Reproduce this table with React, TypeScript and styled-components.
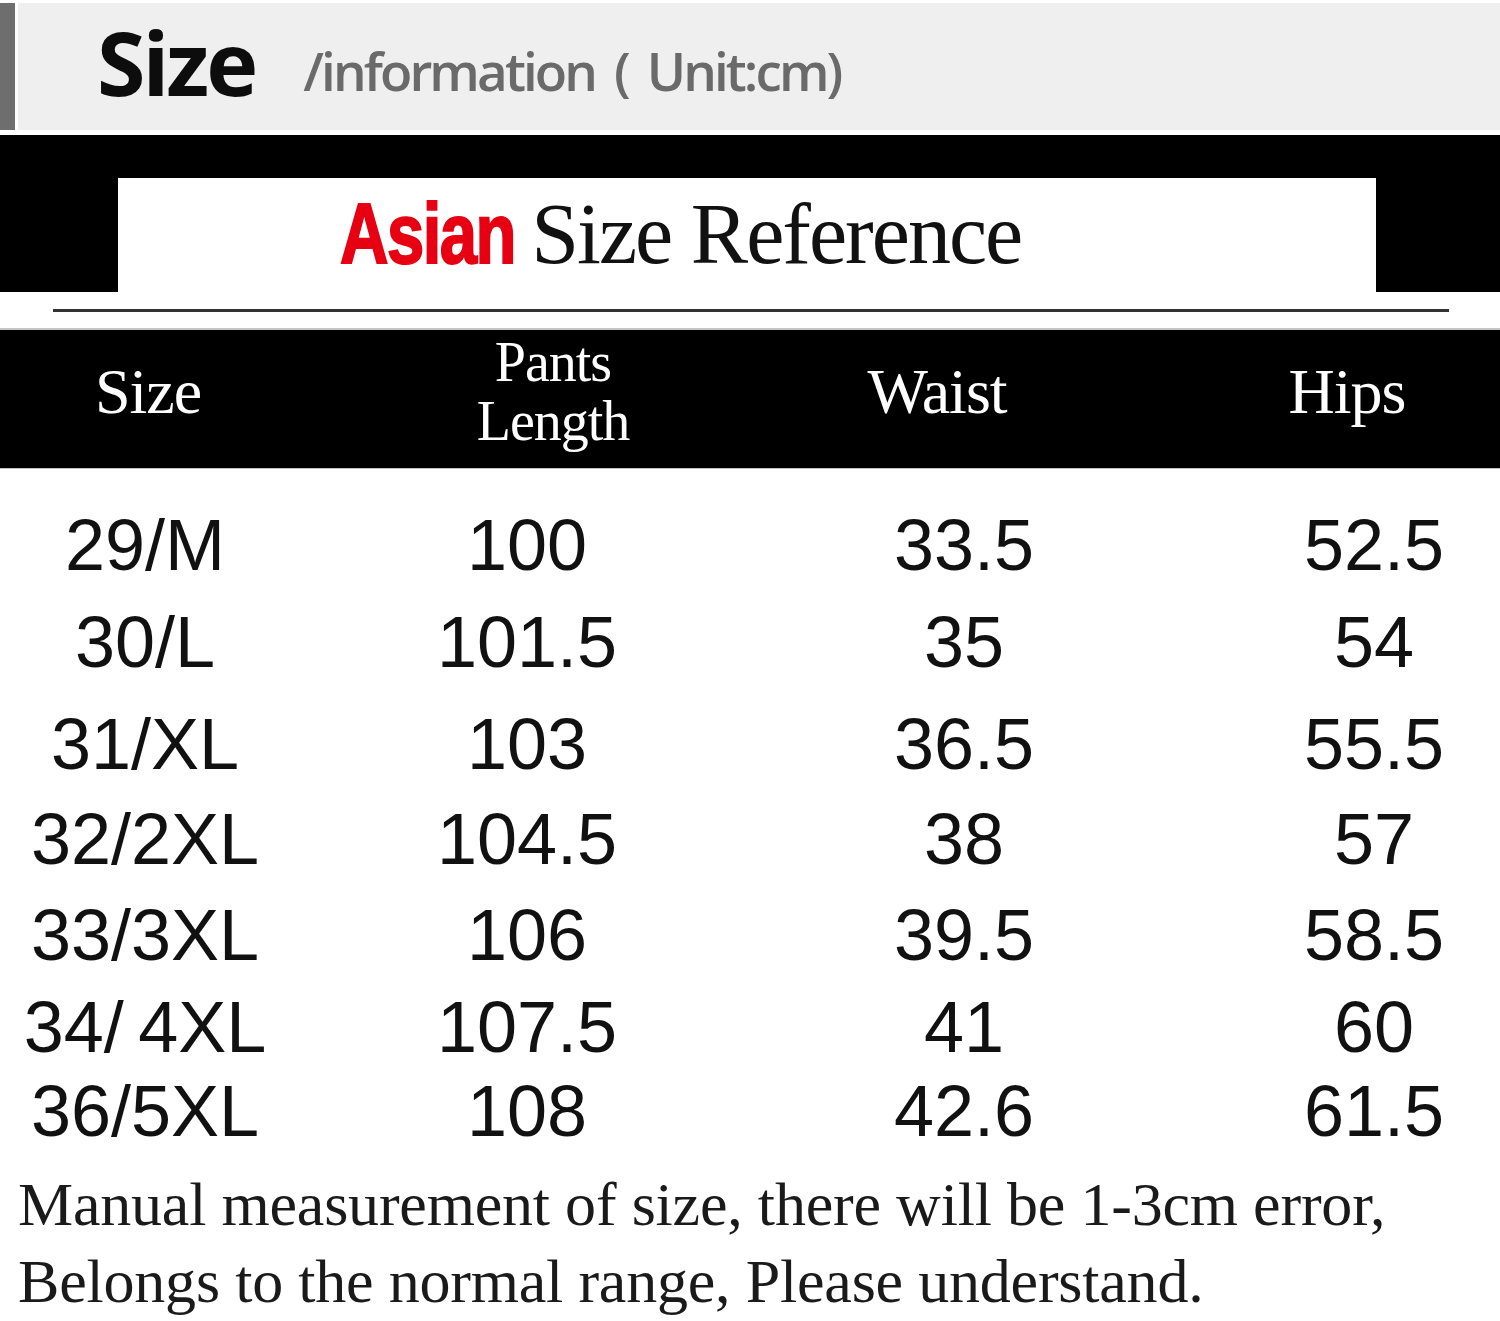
import React from "react";
import styled, { createGlobalStyle } from "styled-components";

const Global = createGlobalStyle`
  html, body { margin: 0; padding: 0; background: #ffffff; }
  body { width: 1500px; overflow: hidden; }
`;

const Page = styled.div`
  width: 1500px;
  display: flex;
  flex-direction: column;
  background: #ffffff;
`;

const TitleBar = styled.div`
  display: flex;
  gap: 3px;
  height: 127px;
  margin-top: 3px;
`;

const AccentBar = styled.div`
  width: 15px;
  background: #6e6e6e;
`;

const TitlePanel = styled.div`
  flex: 1;
  background: #efefef;
  display: flex;
  align-items: baseline;
  padding: 15px 0 0 79px;
  box-sizing: border-box;
`;

const TitleMain = styled.span`
  font-family: "Open Sans", "Noto Sans", sans-serif;
  font-weight: 700;
  font-size: 88px;
  line-height: 88px;
  letter-spacing: -3px;
  color: #0d0d0d;
`;

const TitleSub = styled.span`
  font-family: "Open Sans", "Noto Sans", sans-serif;
  font-weight: 600;
  font-size: 53px;
  letter-spacing: -2.9px;
  color: #6a6a6a;
  margin-left: 48px;
  word-spacing: 8px;
  transform: translateY(-5px);
`;

const Banner = styled.div`
  margin-top: 5px;
  height: 157px;
  background: #000000;
  display: flex;
  padding: 43px 124px 0 118px;
  box-sizing: border-box;
`;

const BannerCard = styled.div`
  flex: 1;
  background: #ffffff;
  display: flex;
  align-items: baseline;
  padding: 12px 0 0 222px;
  box-sizing: border-box;
`;

const RedWord = styled.span`
  display: inline-block;
  font-family: "Liberation Sans", Arial, sans-serif;
  font-weight: 700;
  font-size: 86px;
  line-height: 86px;
  letter-spacing: -2px;
  color: #e60012;
  -webkit-text-stroke: 2px #e60012;
  transform: scaleX(0.78);
  transform-origin: left center;
  margin-right: -33px;
`;

const BannerText = styled.span`
  font-family: "Liberation Serif", "Times New Roman", serif;
  font-size: 86px;
  line-height: 86px;
  letter-spacing: -2px;
  color: #111111;
`;

const Divider = styled.div`
  padding: 17px 51px 16px 53px;
`;

const DividerLine = styled.div`
  height: 3px;
  background: #333333;
`;

const HeaderBand = styled.div`
  background: #000000;
  border-top: 2px solid #c4c4c4;
  border-bottom: 1px solid #c4c4c4;
  height: 141px;
  box-sizing: border-box;
  display: grid;
  grid-template-columns: 296px 514px 254px 1fr;
  align-items: center;
  padding-bottom: 14px;
`;

const HeadCell = styled.div<{ $small?: boolean }>`
  font-family: "Liberation Serif", "Times New Roman", serif;
  color: #ffffff;
  text-align: center;
  font-size: ${(p) => (p.$small ? "56px" : "64px")};
  line-height: ${(p) => (p.$small ? "59px" : "64px")};
  letter-spacing: -1px;
  &:nth-child(4) {
    padding-left: 130px;
  }
`;

const Body = styled.div`
  padding-top: 28px;
  display: flex;
  flex-direction: column;
`;

const DataRow = styled.div<{ $h: number }>`
  height: ${(p) => p.$h}px;
  display: grid;
  grid-template-columns: 290px 474px 400px 1fr;
  align-items: center;
`;

const DataCell = styled.div`
  font-family: "Liberation Sans", Arial, sans-serif;
  font-size: 72px;
  line-height: 72px;
  color: #111111;
  text-align: center;
  &:nth-child(4) {
    padding-left: 84px;
  }
`;

const Note = styled.div`
  padding: 9px 0 0 18px;
  font-family: "Liberation Serif", "Times New Roman", serif;
  font-size: 62px;
  line-height: 77px;
  letter-spacing: -0.2px;
  color: #1a1a1a;
`;

const rows: { h: number; v: [string, string, string, string] }[] = [
  { h: 96, v: ["29/M", "100", "33.5", "52.5"] },
  { h: 98, v: ["30/L", "101.5", "35", "54"] },
  { h: 106, v: ["31/XL", "103", "36.5", "55.5"] },
  { h: 84, v: ["32/2XL", "104.5", "38", "57"] },
  { h: 108, v: ["33/3XL", "106", "39.5", "58.5"] },
  { h: 76, v: ["34/\u20094XL", "107.5", "41", "60"] },
  { h: 92, v: ["36/5XL", "108", "42.6", "61.5"] },
];

export default function App() {
  return (
    <Page>
      <Global />
      <TitleBar>
        <AccentBar />
        <TitlePanel>
          <TitleMain>Size</TitleMain>
          <TitleSub>/information ( Unit:cm)</TitleSub>
        </TitlePanel>
      </TitleBar>
      <Banner>
        <BannerCard>
          <RedWord>Asian</RedWord>
          <BannerText>Size Reference</BannerText>
        </BannerCard>
      </Banner>
      <Divider>
        <DividerLine />
      </Divider>
      <HeaderBand>
        <HeadCell>Size</HeadCell>
        <HeadCell $small>
          Pants
          <br />
          Length
        </HeadCell>
        <HeadCell>Waist</HeadCell>
        <HeadCell>Hips</HeadCell>
      </HeaderBand>
      <Body>
        {rows.map((r, i) => (
          <DataRow key={i} $h={r.h}>
            {r.v.map((c, j) => (
              <DataCell key={j}>{c}</DataCell>
            ))}
          </DataRow>
        ))}
      </Body>
      <Note>
        Manual measurement of size, there will be 1-3cm error,
        <br />
        Belongs to the normal range, Please understand.
      </Note>
    </Page>
  );
}
